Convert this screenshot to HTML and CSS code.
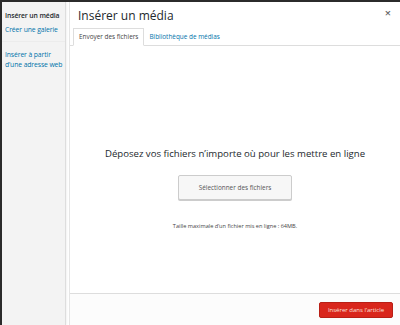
FILE: index.html
```html
<!DOCTYPE html>
<html lang="fr">
<head>
  <meta charset="UTF-8" />
  <title>Insérer un média</title>
  <link rel="stylesheet" href="styles.css">
</head>
<body>
  <div class="frame">
    <div class="menu">
      <a class="menu-item active" href="#">Insérer un média</a>
      <a class="menu-item" href="#">Créer une galerie</a>
      <div class="separator"></div>
      <a class="menu-item" href="#">Insérer à partir<br>d’une adresse web</a>
    </div>
    <div class="main">
      <div class="title">
        <h1>Insérer un média</h1>
        <span class="close">&times;</span>
      </div>
      <div class="tabs">
        <a class="tab active" href="#">Envoyer des fichiers</a>
        <a class="tab" href="#">Bibliothèque de médias</a>
      </div>
      <div class="content">
        <h2>Déposez vos fichiers n’importe où pour les mettre en ligne</h2>
        <button class="btn">Sélectionner des fichiers</button>
        <p class="max-size">Taille maximale d’un fichier mis en ligne : 64MB.</p>
      </div>
      <div class="toolbar">
        <button class="btn-primary">Insérer dans l’article</button>
      </div>
    </div>
  </div>
</body>
</html>
```

FILE: styles.css
```css
body {
  margin: 0;
  font-family: "Open Sans", "Liberation Sans", sans-serif;
  background-color: #2b2b2b;
}

.frame {
  display: flex;
  height: 323px;
  margin: 2px 0 0 2px;
  background-color: #fff;
}

.menu {
  width: 64px;
  background-color: #f3f3f3;
  border-right: 1px solid #ddd;
  box-shadow: 1px 0 2px rgba(0, 0, 0, 0.06);
  padding: 9px 0 0 3px;
  box-sizing: border-box;
  flex-shrink: 0;
}

.menu-item {
  display: block;
  font-size: 6.8px;
  letter-spacing: -0.1px;
  line-height: 10px;
  color: #0073aa;
  text-decoration: none;
  margin-bottom: 4px;
  white-space: nowrap;
}

.menu-item.active {
  color: #23282d;
  font-weight: 600;
}

.separator {
  height: 1px;
  margin: 6px 0 8px -3px;
  background-color: #ececec;
}

.main {
  flex: 1;
  display: flex;
  flex-direction: column;
  margin-left: 3px;
  border-left: 1px solid #e5e5e5;
}

.title {
  height: 26px;
  display: flex;
  align-items: center;
  justify-content: space-between;
  padding: 0 9px 0 8px;
}

.title h1 {
  margin: 0;
  font-size: 12px;
  font-weight: 400;
  color: #23282d;
}

.close {
  font-size: 11px;
  font-weight: 600;
  color: #666;
  margin-top: -6px;
}

.tabs {
  display: flex;
  height: 17px;
  padding-left: 3px;
  border-bottom: 1px solid #ddd;
}

.tab {
  font-size: 6.4px;
  line-height: 17px;
  padding: 0 5px;
  color: #0073aa;
  text-decoration: none;
}

.tab.active {
  color: #444;
  background-color: #fff;
  border: 1px solid #ddd;
  border-bottom-color: #fff;
  margin-bottom: -1px;
  line-height: 16px;
}

.content {
  flex: 1;
  display: flex;
  flex-direction: column;
  align-items: center;
  padding-top: 101px;
}

.content h2 {
  margin: 0;
  font-size: 9.6px;
  font-weight: 400;
  color: #23282d;
}

.btn {
  margin-top: 15px;
  width: 114px;
  height: 25px;
  font-family: inherit;
  font-size: 6.4px;
  color: #555;
  background-color: #f7f7f7;
  border: 1px solid #ccc;
  border-radius: 2px;
  box-shadow: 0 1px 0 #ccc;
}

.max-size {
  margin: 22px 0 0;
  font-size: 5.6px;
  color: #444;
}

.toolbar {
  height: 31px;
  display: flex;
  align-items: center;
  justify-content: flex-end;
  padding-right: 7px;
  border-top: 1px solid #ddd;
  background-color: #fcfcfc;
}

.btn-primary {
  width: 74px;
  height: 16px;
  font-family: inherit;
  font-size: 6px;
  color: #fbe3df;
  background-color: #d9261c;
  border: 1px solid #b81f16;
  border-radius: 2px;
}
```
